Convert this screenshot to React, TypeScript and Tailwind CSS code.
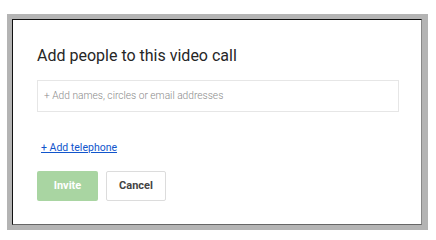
import React from "react";

export default function App() {
  return (
    <div className="w-[436px] h-[239px] bg-white pt-[14px] pl-[7px]" style={{ fontFamily: "Roboto, Arial, sans-serif" }}>
      <div className="w-[421px] h-[216px] bg-[#b4b4b4] pt-[5px] pl-[5px]">
        <div className="w-[410px] h-[206px] bg-white border border-t-[#111] border-l-[#111] border-r-[#888] border-b-[#666] pl-[24px] pr-[22px]">
          <div className="pt-[26px] text-[16px] leading-[20px] text-[#262626]">Add people to this video call</div>
          <div className="mt-[14px] h-[32px] border border-[#e6e6e6] flex items-center pl-[6px] text-[10.2px] font-light text-[#8a8a8a]">
            + Add names, circles or email addresses
          </div>
          <div className="mt-[29px] pl-[4px] text-[10.5px] leading-[14px]">
            <span className="text-[#1155cc] underline">+ Add telephone</span>
          </div>
          <div className="mt-[16px] flex gap-[8px]">
            <div className="w-[61px] h-[30px] rounded-[2px] bg-[#a9d5a2] text-white text-[11px] font-bold flex items-center justify-center">Invite</div>
            <div className="w-[60px] h-[30px] rounded-[2px] border border-[#dcdcdc] text-[#444] text-[11px] font-bold flex items-center justify-center">Cancel</div>
          </div>
        </div>
      </div>
    </div>
  );
}
